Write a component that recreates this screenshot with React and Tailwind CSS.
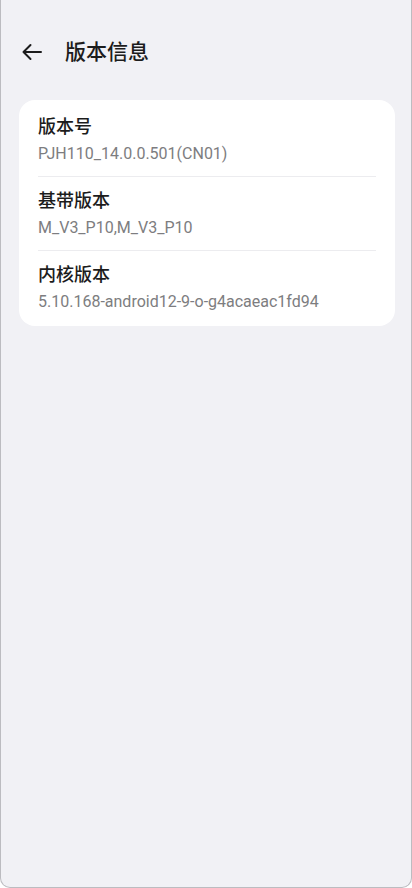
const items = [
  { title: '版本号', value: 'PJH110_14.0.0.501(CN01)' },
  { title: '基带版本', value: 'M_V3_P10,M_V3_P10' },
  { title: '内核版本', value: '5.10.168-android12-9-o-g4acaeac1fd94' },
]

function BackArrow() {
  return (
    <svg width="24" height="24" viewBox="0 0 24 24" fill="none" stroke="#1c1c1c" strokeWidth={2} strokeLinecap="round" strokeLinejoin="round">
      <path d="M21 12H3.5M10.5 5l-7 7 7 7" />
    </svg>
  )
}

export default function App() {
  return (
    <div
      className="h-[888px] bg-[#f1f1f5] border-x border-b border-[#bcbcc0] rounded-b-[10px] overflow-hidden"
      style={{ fontFamily: 'Roboto, "Noto Sans CJK SC", sans-serif' }}
    >
      {/* Header */}
      <div className="h-[104px] pt-[28px] pl-[19px] flex items-start">
        <div className="h-[48px] flex items-center gap-[21px]">
          <BackArrow />
          <h1 className="text-[21px] font-medium text-[#1c1c1c] leading-none">版本信息</h1>
        </div>
      </div>

      {/* Card */}
      <div className="ml-[18px] mr-[16px] -mt-[4px] bg-white rounded-[16px] px-[19px] py-[2px]">
        {items.map((item, i) => (
          <div key={item.title} className={i > 0 ? 'border-t border-[#ececef]' : ''}>
            <div className={i === 0 ? 'pt-[13px] pb-[11px]' : 'pt-[12px] pb-[11px]'}>
              <p className="text-[18px] font-medium leading-[24px] text-[#1c1c1c]">{item.title}</p>
              <p className="mt-[4px] text-[16px] leading-[22px] text-[#7d7d80]">{item.value}</p>
            </div>
          </div>
        ))}
      </div>
    </div>
  )
}
